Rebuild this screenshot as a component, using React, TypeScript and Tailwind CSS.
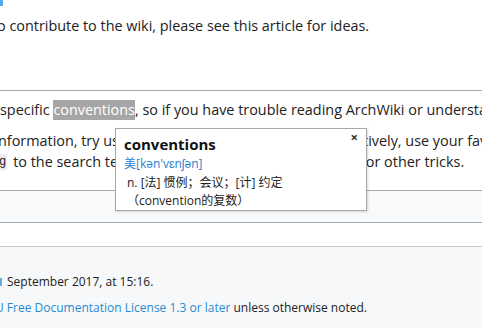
import React from "react";

const font = { fontFamily: '"Open Sans", "Noto Sans CJK SC", sans-serif' };

const WordPopup: React.FC = () => {
  return (
    <div className="absolute left-[115px] top-[128px] w-[252px] h-[83px] bg-white border border-[#a8a8a8] shadow-[1px_1px_2px_rgba(0,0,0,0.15)] px-[8px] pt-[5px]">
      <button className="absolute right-[8px] top-[2px] text-[13px] font-bold text-[#333] leading-none">×</button>
      <div className="text-[15px] font-bold text-[#111] leading-[20px]">conventions</div>
      <div className="text-[12px] text-[#2a7fd0] leading-[17px] mt-[1px]">美[kən&#39;vɛnʃən]</div>
      <div className="text-[12px] text-[#222] leading-[18px] mt-[2px] pl-[3px]">n. [法] 惯例；会议；[计] 约定</div>
      <div className="text-[12px] text-[#222] leading-[17px] pl-[3px]">（convention的复数）</div>
    </div>
  );
};

const App: React.FC = () => {
  return (
    <div className="relative w-[482px] h-[328px] overflow-hidden bg-white text-[#222]" style={font}>
      <div className="h-[6px]">
        <span className="block w-[3px] h-[6px] bg-[#5aa9e6]" />
      </div>

      <p className="text-[14.4px] leading-[20px] mt-[10px] whitespace-nowrap -ml-[3px]">
        o contribute to the wiki, please see this article for ideas.
      </p>

      <div className="mt-[54px] border-t border-[#a2a9b1] h-[100px] pt-[9px] text-[14.4px]">
        <p className="leading-[20px] whitespace-nowrap overflow-hidden">
          specific{" "}
          <span className="bg-[#a6a6a6] text-white py-[1px]">conventions</span>, so if you have trouble
          reading ArchWiki or understanding
        </p>
        <p className="mt-[10px] leading-[21px] whitespace-nowrap flex overflow-hidden">
          <span className="w-[115px] shrink-0 overflow-hidden">
            <span className="-ml-[2px] inline-block">nformation, try using the search</span>
          </span>
          <span className="w-[248px] shrink-0" />
          <span>tively, use your favourite</span>
        </p>
        <p className="leading-[21px] whitespace-nowrap flex items-center overflow-hidden">
          <span className="w-[115px] shrink-0 overflow-hidden flex items-center">
            <code className="bg-[#eaecf0] text-[12px] leading-[16px] px-[1px] mr-[6px] -ml-[2px] font-mono">g</code>
            to the search terms
          </span>
          <span className="w-[246px] shrink-0" />
          <span>for other tricks.</span>
        </p>
      </div>

      <div className="h-[33px] border-y border-[#a2a9b1] bg-[#f8f9fa]" />

      <div className="mt-[23px] border-t border-[#c8ccd1] bg-[#f6f8fa] h-[90px] pt-[26px] text-[12px] leading-[18px]">
        <p className="whitespace-nowrap flex items-center">
          <span className="inline-block w-[2px] h-[8px] bg-[#6aa9dc] mr-[5px]" />
          September 2017, at 15:16.
        </p>
        <p className="whitespace-nowrap mt-[8px]">
          <span className="text-[#2a8ad0] -ml-[5px]">U Free Documentation License 1.3 or later</span> unless
          otherwise noted.
        </p>
      </div>

      <WordPopup />
    </div>
  );
};

export default App;
